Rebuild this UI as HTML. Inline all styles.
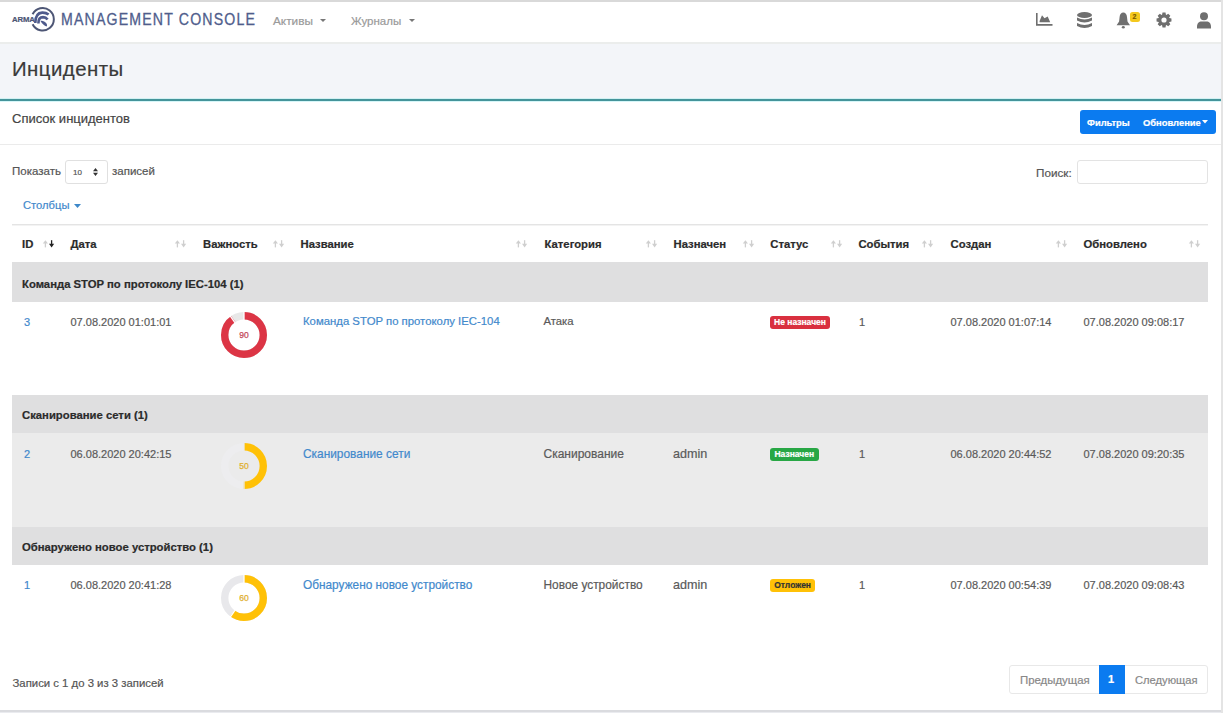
<!DOCTYPE html>
<html><head><meta charset="utf-8">
<style>
*{margin:0;padding:0;box-sizing:border-box}
html,body{width:1223px;height:713px;overflow:hidden;background:#fff;font-family:"Liberation Sans",sans-serif;color:#555;-webkit-text-stroke-width:0.2px}
.a{position:absolute;white-space:nowrap}
#topline{left:0;top:0;width:1223px;height:2px;background:#d9d9d9}
#nav{left:0;top:2px;width:1223px;height:42px;background:#fff;border-bottom:2px solid #ebedec}
#band{left:0;top:44px;width:1223px;height:55px;background:#f3f5f9}
#teal{left:0;top:98px;width:1223px;height:4px;background:linear-gradient(#d2f1f3 0,#d2f1f3 1px,#44949a 1px,#44949a 3px,#d6f6f8 3px)}
#rborder{left:1221px;top:0;width:2px;height:713px;background:#e4e4e4}
#bottom{left:0;top:709.5px;width:1223px;height:3.5px;background:linear-gradient(#dadbdf 0,#dadbdf 1.5px,#eaebef 1.5px)}
.th{font-weight:bold;font-size:11.3px;color:#2b2b2b}
.td{font-size:11px;color:#5a5a5a}
.lnk{color:#4289cc}
.sort{width:13px;height:10px}
.grp{left:12px;width:1196px;height:39px;background:#dfdfe0}
.badge{height:13px;border-radius:3px;color:#fff;font-weight:bold;font-size:8.5px;line-height:13px;text-align:center}
</style></head><body>
<div id="topline" class="a"></div>
<div id="nav" class="a"></div>
<div id="band" class="a"></div>
<div id="teal" class="a"></div>

<!-- logo -->
<div class="a" style="left:12.3px;top:14.6px;font-size:7.4px;font-weight:bold;color:#4d5675;letter-spacing:-0.15px;transform:scaleX(1.05);transform-origin:0 0">ARMA</div>
<svg class="a" style="left:30px;top:6px" width="26" height="27" viewBox="30 6 26 27">
  <path d="M32.6 14.3 A11.2 11.2 0 1 1 32.6 24.2" fill="none" stroke="#4d5675" stroke-width="2"/>
  <path d="M35.3 23 C35.3 17 37.5 12.8 42.2 12.6 C45 12.5 47 13.3 48.6 14.6" fill="none" stroke="#4f5b8c" stroke-width="2.6"/>
  <path d="M38.4 23.5 C38.3 19.5 40 17.2 43 17.1 C45 17.1 46.6 18 47.6 19.4" fill="none" stroke="#4f5b8c" stroke-width="2.6"/>
  <path d="M40.5 21 C42.5 20.5 44.5 21.2 46.5 23.5 C47.3 24.6 47.2 26.2 46.5 26.6 C44.5 25.8 42 24 40.5 21Z" fill="#4f5b8c"/>
</svg>
<div class="a" style="left:61px;top:10.5px;font-size:15.9px;color:#4f5d8c;letter-spacing:1.3px;transform:scaleX(0.89);transform-origin:0 0;-webkit-text-stroke:0.3px #4f5d8c">MANAGEMENT CONSOLE</div>
<div class="a" style="left:273px;top:14px;font-size:11.8px;color:#9a9a9a">Активы</div>
<svg class="a" style="left:319.5px;top:18.5px" width="6" height="3"><path d="M0 0H6L3 3Z" fill="#777"/></svg>
<div class="a" style="left:351px;top:14.5px;font-size:11.5px;color:#9a9a9a">Журналы</div>
<svg class="a" style="left:408.5px;top:18.5px" width="6" height="3"><path d="M0 0H6L3 3Z" fill="#777"/></svg>

<!-- right icons -->
<svg class="a" style="left:1035.5px;top:13.3px" width="17" height="13" viewBox="0 0 17 13">
  <path d="M0 0H1.6V11.1H16.5V12.7H0Z" fill="#6f6f6f"/>
  <path d="M3.6 9.2 L3.6 8 L6 2.2 L8.5 5.3 L11.7 3.6 L14.2 9.2Z" fill="#6f6f6f"/>
</svg>
<svg class="a" style="left:1077px;top:12px" width="15" height="17" viewBox="0 0 15 17">
  <ellipse cx="7.5" cy="3" rx="7.5" ry="3" fill="#6f6f6f"/>
  <path d="M0 5.5 Q7.5 9.5 15 5.5 V8.5 Q7.5 12.5 0 8.5Z" fill="#6f6f6f"/>
  <path d="M0 11 Q7.5 15 15 11 V14 Q7.5 18 0 14Z" fill="#6f6f6f"/>
</svg>
<svg class="a" style="left:1116px;top:11.5px" width="15" height="17" viewBox="0 0 15 17">
  <path d="M7.3 0.6 C5.2 0.6 3.9 2.3 3.6 5 L3.1 9.6 L0.6 13.3 H14 L11.5 9.6 L11 5 C10.7 2.3 9.4 0.6 7.3 0.6Z" fill="#6f6f6f"/>
  <ellipse cx="7.3" cy="15.3" rx="1.5" ry="1.3" fill="#6f6f6f"/>
</svg>
<div class="a" style="left:1129.5px;top:11.5px;width:10px;height:10px;background:#f4c81e;border-radius:2.5px;font-size:7px;line-height:10px;text-align:center;color:#7a5a00;font-weight:bold">2</div>
<svg class="a" style="left:1155.7px;top:12.2px" width="16" height="16" viewBox="0 0 16 16"><path d="M6.08 2.74 L6.49 0.55 L9.51 0.55 L9.92 2.74 L10.36 2.92 L12.20 1.67 L14.33 3.80 L13.08 5.64 L13.26 6.08 L15.45 6.49 L15.45 9.51 L13.26 9.92 L13.08 10.36 L14.33 12.20 L12.20 14.33 L10.36 13.08 L9.92 13.26 L9.51 15.45 L6.49 15.45 L6.08 13.26 L5.64 13.08 L3.80 14.33 L1.67 12.20 L2.92 10.36 L2.74 9.92 L0.55 9.51 L0.55 6.49 L2.74 6.08 L2.92 5.64 L1.67 3.80 L3.80 1.67 L5.64 2.92Z M8 5.4 A2.6 2.6 0 1 0 8 10.6 A2.6 2.6 0 1 0 8 5.4Z" fill="#6f6f6f" fill-rule="evenodd"/></svg>
<svg class="a" style="left:1197px;top:12px" width="14" height="17" viewBox="0 0 14 17">
  <circle cx="7" cy="4.2" r="4" fill="#6f6f6f"/>
  <path d="M0 15 C0 11 2 9.5 4.5 9.5 H9.5 C12 9.5 14 11 14 15 V16.5 H0Z" fill="#6f6f6f"/>
</svg>

<!-- title -->
<div class="a" style="left:12px;top:57.9px;font-size:20.4px;color:#3a3a3a;letter-spacing:0.45px">Инциденты</div>

<!-- card header -->
<div class="a" style="left:12px;top:111px;font-size:13px;color:#444">Список инцидентов</div>
<div class="a" style="left:1080px;top:110px;width:136px;height:24px;background:#0b7bf0;border-radius:3px"></div>
<div class="a" style="left:1087px;top:118px;font-size:9.3px;font-weight:bold;color:#fff">Фильтры</div>
<div class="a" style="left:1143px;top:117.3px;font-size:9.4px;font-weight:bold;color:#fff">Обновление</div>
<svg class="a" style="left:1202px;top:120px" width="6" height="4"><path d="M0 0H6L3 3.5Z" fill="#fff"/></svg>
<div class="a" style="left:0;top:143.5px;width:1221px;height:1.5px;background:#ebebeb"></div>

<!-- controls -->
<div class="a" style="left:12px;top:164.5px;font-size:11.5px;color:#555">Показать</div>
<div class="a" style="left:65px;top:160px;width:43px;height:24px;border:1px solid #e0e0e0;border-radius:3px;background:#fff"></div>
<div class="a" style="left:73px;top:168px;font-size:8px;color:#555">10</div>
<svg class="a" style="left:93px;top:168px" width="5" height="8"><path d="M0 3.3H5L2.5 0Z M0 4.7H5L2.5 8Z" fill="#333"/></svg>
<div class="a" style="left:112px;top:164.5px;font-size:11.5px;color:#555">записей</div>
<div class="a" style="left:1036px;top:165.5px;font-size:11.7px;color:#555">Поиск:</div>
<div class="a" style="left:1077px;top:160px;width:131px;height:24px;border:1px solid #e3e3e3;border-radius:3px;background:#fff"></div>
<div class="a lnk" style="left:23px;top:199px;font-size:11.2px">Столбцы</div>
<svg class="a" style="left:73.5px;top:203.5px" width="7" height="4"><path d="M0 0H7L3.5 4Z" fill="#3d88c9"/></svg>
<div class="a" style="left:12px;top:224px;width:1196px;height:1px;background:#e4e4e4"></div><div class="a" style="left:12px;top:225px;width:1196px;height:1px;background:#f3f3f3"></div>

<!-- table header -->
<div class="a th" style="left:22px;top:238.2px">ID</div>
<div class="a th" style="left:70.5px;top:238.2px">Дата</div>
<div class="a th" style="left:203px;top:238.2px">Важность</div>
<div class="a th" style="left:300.5px;top:238.2px">Название</div>
<div class="a th" style="left:544.5px;top:238.2px">Категория</div>
<div class="a th" style="left:673.5px;top:238.2px">Назначен</div>
<div class="a th" style="left:770.3px;top:238.2px">Статус</div>
<div class="a th" style="left:858.4px;top:238.2px">События</div>
<div class="a th" style="left:950.5px;top:238.2px">Создан</div>
<div class="a th" style="left:1083.5px;top:238.2px">Обновлено</div>
<svg class="a" style="left:42px;top:240.3px" width="13" height="8" viewBox="0 0 13 8"><path d="M3.4 2.5V7.4" stroke="#cfcfcf" stroke-width="1.3"/><path d="M0.8 3.6L3.4 0.2L6 3.6Z" fill="#cfcfcf"/><path d="M9.6 0.2V5" stroke="#222" stroke-width="1.3"/><path d="M7 3.8L9.6 7.4L12.2 3.8Z" fill="#222"/></svg>
<svg class="a" style="left:174.4px;top:240.3px" width="13" height="8" viewBox="0 0 13 8"><path d="M3.4 2.5V7.4" stroke="#cfcfcf" stroke-width="1.3"/><path d="M0.8 3.6L3.4 0.2L6 3.6Z" fill="#cfcfcf"/><path d="M9.6 0.2V5" stroke="#cfcfcf" stroke-width="1.3"/><path d="M7 3.8L9.6 7.4L12.2 3.8Z" fill="#cfcfcf"/></svg>
<svg class="a" style="left:272.3px;top:240.3px" width="13" height="8" viewBox="0 0 13 8"><path d="M3.4 2.5V7.4" stroke="#cfcfcf" stroke-width="1.3"/><path d="M0.8 3.6L3.4 0.2L6 3.6Z" fill="#cfcfcf"/><path d="M9.6 0.2V5" stroke="#cfcfcf" stroke-width="1.3"/><path d="M7 3.8L9.6 7.4L12.2 3.8Z" fill="#cfcfcf"/></svg>
<svg class="a" style="left:514.9px;top:240.3px" width="13" height="8" viewBox="0 0 13 8"><path d="M3.4 2.5V7.4" stroke="#cfcfcf" stroke-width="1.3"/><path d="M0.8 3.6L3.4 0.2L6 3.6Z" fill="#cfcfcf"/><path d="M9.6 0.2V5" stroke="#cfcfcf" stroke-width="1.3"/><path d="M7 3.8L9.6 7.4L12.2 3.8Z" fill="#cfcfcf"/></svg>
<svg class="a" style="left:644.7px;top:240.3px" width="13" height="8" viewBox="0 0 13 8"><path d="M3.4 2.5V7.4" stroke="#cfcfcf" stroke-width="1.3"/><path d="M0.8 3.6L3.4 0.2L6 3.6Z" fill="#cfcfcf"/><path d="M9.6 0.2V5" stroke="#cfcfcf" stroke-width="1.3"/><path d="M7 3.8L9.6 7.4L12.2 3.8Z" fill="#cfcfcf"/></svg>
<svg class="a" style="left:741.5px;top:240.3px" width="13" height="8" viewBox="0 0 13 8"><path d="M3.4 2.5V7.4" stroke="#cfcfcf" stroke-width="1.3"/><path d="M0.8 3.6L3.4 0.2L6 3.6Z" fill="#cfcfcf"/><path d="M9.6 0.2V5" stroke="#cfcfcf" stroke-width="1.3"/><path d="M7 3.8L9.6 7.4L12.2 3.8Z" fill="#cfcfcf"/></svg>
<svg class="a" style="left:829.8px;top:240.3px" width="13" height="8" viewBox="0 0 13 8"><path d="M3.4 2.5V7.4" stroke="#cfcfcf" stroke-width="1.3"/><path d="M0.8 3.6L3.4 0.2L6 3.6Z" fill="#cfcfcf"/><path d="M9.6 0.2V5" stroke="#cfcfcf" stroke-width="1.3"/><path d="M7 3.8L9.6 7.4L12.2 3.8Z" fill="#cfcfcf"/></svg>
<svg class="a" style="left:921.4px;top:240.3px" width="13" height="8" viewBox="0 0 13 8"><path d="M3.4 2.5V7.4" stroke="#cfcfcf" stroke-width="1.3"/><path d="M0.8 3.6L3.4 0.2L6 3.6Z" fill="#cfcfcf"/><path d="M9.6 0.2V5" stroke="#cfcfcf" stroke-width="1.3"/><path d="M7 3.8L9.6 7.4L12.2 3.8Z" fill="#cfcfcf"/></svg>
<svg class="a" style="left:1054.7px;top:240.3px" width="13" height="8" viewBox="0 0 13 8"><path d="M3.4 2.5V7.4" stroke="#cfcfcf" stroke-width="1.3"/><path d="M0.8 3.6L3.4 0.2L6 3.6Z" fill="#cfcfcf"/><path d="M9.6 0.2V5" stroke="#cfcfcf" stroke-width="1.3"/><path d="M7 3.8L9.6 7.4L12.2 3.8Z" fill="#cfcfcf"/></svg>
<svg class="a" style="left:1188.2px;top:240.3px" width="13" height="8" viewBox="0 0 13 8"><path d="M3.4 2.5V7.4" stroke="#cfcfcf" stroke-width="1.3"/><path d="M0.8 3.6L3.4 0.2L6 3.6Z" fill="#cfcfcf"/><path d="M9.6 0.2V5" stroke="#cfcfcf" stroke-width="1.3"/><path d="M7 3.8L9.6 7.4L12.2 3.8Z" fill="#cfcfcf"/></svg>

<!-- group rows -->
<div class="a grp" style="top:262px;height:40px"></div>
<div class="a th" style="left:22px;top:278px">Команда STOP по протоколу IEC-104 (1)</div>
<div class="a grp" style="top:395px;height:38px"></div>
<div class="a th" style="left:22px;top:409px">Сканирование сети (1)</div>
<div class="a" style="left:12px;top:433px;width:1196px;height:94px;background:#ebebeb"></div>
<div class="a grp" style="top:527px;height:38px"></div>
<div class="a th" style="left:22px;top:541px">Обнаружено новое устройство (1)</div>

<div class="a td lnk" style="left:24px;top:315.5px">3</div>
<div class="a td" style="left:70.5px;top:315.5px">07.08.2020 01:01:01</div>
<svg class="a" style="left:220px;top:311px;-webkit-text-stroke-width:0" width="48" height="48" viewBox="0 0 48 48"><circle cx="24" cy="24" r="19.3" fill="none" stroke="#e8e8e8" stroke-width="7.4"/><circle cx="24" cy="24" r="19.3" fill="none" stroke="#dc3545" stroke-width="7.4" stroke-dasharray="109.14 121.27" transform="rotate(-90 24 24)"/><line x1="24.00" y1="8.90" x2="24.00" y2="0.50" stroke="#fff" stroke-width="1.3"/><line x1="15.12" y1="11.78" x2="10.19" y2="4.99" stroke="#fff" stroke-width="1.3"/><text x="24" y="27.3" text-anchor="middle" font-family="Liberation Sans" font-size="8.5" fill="#c44a5a" stroke="#c44a5a" stroke-width="0.25">90</text></svg>
<div class="a td lnk" style="left:303px;top:315.1px;font-size:11.35px">Команда STOP по протоколу IEC-104</div>
<div class="a td" style="left:543.5px;top:315.1px;font-size:11.3px">Атака</div>
<div class="a badge" style="left:770px;top:315.8px;width:60px;background:#d9303f;color:#fff">Не назначен</div>
<div class="a td" style="left:859px;top:315.5px">1</div>
<div class="a td" style="left:950.5px;top:315.5px">07.08.2020 01:07:14</div>
<div class="a td" style="left:1083.5px;top:315.5px">07.08.2020 09:08:17</div>
<div class="a td lnk" style="left:24px;top:447.5px">2</div>
<div class="a td" style="left:70.5px;top:447.5px">06.08.2020 20:42:15</div>
<svg class="a" style="left:220px;top:442px;-webkit-text-stroke-width:0" width="48" height="48" viewBox="0 0 48 48"><circle cx="24" cy="24" r="19.3" fill="none" stroke="#ededef" stroke-width="7.4"/><circle cx="24" cy="24" r="19.3" fill="none" stroke="#ffc107" stroke-width="7.4" stroke-dasharray="60.63 121.27" transform="rotate(-90 24 24)"/><line x1="24.00" y1="8.90" x2="24.00" y2="0.50" stroke="#ebebeb" stroke-width="1.3"/><line x1="24.00" y1="39.10" x2="24.00" y2="47.50" stroke="#ebebeb" stroke-width="1.3"/><text x="24" y="27.3" text-anchor="middle" font-family="Liberation Sans" font-size="8.5" fill="#e0b030" stroke="#e0b030" stroke-width="0.25">50</text></svg>
<div class="a td lnk" style="left:303px;top:447.1px;font-size:11.9px">Сканирование сети</div>
<div class="a td" style="left:543.5px;top:447.1px;font-size:12.0px">Сканирование</div>
<div class="a td" style="left:673px;top:446.9px;font-size:12.6px">admin</div>
<div class="a badge" style="left:770px;top:447.8px;width:48.6px;background:#28a745;color:#fff">Назначен</div>
<div class="a td" style="left:859px;top:447.5px">1</div>
<div class="a td" style="left:950.5px;top:447.5px">06.08.2020 20:44:52</div>
<div class="a td" style="left:1083.5px;top:447.5px">07.08.2020 09:20:35</div>
<div class="a td lnk" style="left:24px;top:578.7px">1</div>
<div class="a td" style="left:70.5px;top:578.7px">06.08.2020 20:41:28</div>
<svg class="a" style="left:220px;top:574px;-webkit-text-stroke-width:0" width="48" height="48" viewBox="0 0 48 48"><circle cx="24" cy="24" r="19.3" fill="none" stroke="#e8e8eb" stroke-width="7.4"/><circle cx="24" cy="24" r="19.3" fill="none" stroke="#ffc107" stroke-width="7.4" stroke-dasharray="72.76 121.27" transform="rotate(-90 24 24)"/><line x1="24.00" y1="8.90" x2="24.00" y2="0.50" stroke="#fff" stroke-width="1.3"/><line x1="15.12" y1="36.22" x2="10.19" y2="43.01" stroke="#fff" stroke-width="1.3"/><text x="24" y="27.3" text-anchor="middle" font-family="Liberation Sans" font-size="8.5" fill="#e0b030" stroke="#e0b030" stroke-width="0.25">60</text></svg>
<div class="a td lnk" style="left:303px;top:578.3000000000001px;font-size:11.85px">Обнаружено новое устройство</div>
<div class="a td" style="left:543.5px;top:578.3000000000001px;font-size:11.9px">Новое устройство</div>
<div class="a td" style="left:673px;top:578.1px;font-size:12.6px">admin</div>
<div class="a badge" style="left:770px;top:579.0px;width:45.2px;background:#ffc107;color:#333">Отложен</div>
<div class="a td" style="left:859px;top:578.7px">1</div>
<div class="a td" style="left:950.5px;top:578.7px">07.08.2020 00:54:39</div>
<div class="a td" style="left:1083.5px;top:578.7px">07.08.2020 09:08:43</div>

<!-- footer -->
<div class="a" style="left:12.5px;top:677px;font-size:11.35px;color:#555">Записи с 1 до 3 из 3 записей</div>
<div class="a" style="left:1009px;top:665px;width:199px;height:29px;border:1px solid #e8e8e8;border-radius:3px;background:#fff"></div>
<div class="a" style="left:1098.5px;top:664.5px;width:26.5px;height:29.5px;background:#0b7bf0"></div>
<div class="a" style="left:1020px;top:673.8px;font-size:11.4px;color:#888">Предыдущая</div>
<div class="a" style="left:1108px;top:673px;font-size:11px;color:#fff;font-weight:bold">1</div>
<div class="a" style="left:1135px;top:673.8px;font-size:11.2px;color:#888">Следующая</div>

<div id="bottom" class="a"></div>
<div id="rborder" class="a"></div>
</body></html>
